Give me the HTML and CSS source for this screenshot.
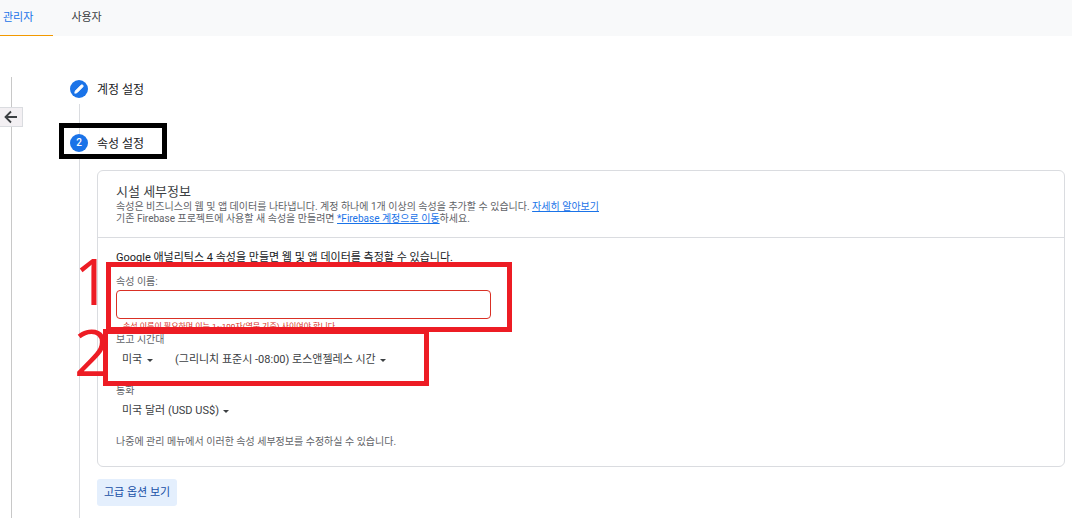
FILE: index.html
```html
<!DOCTYPE html>
<html lang="ko">
<head>
  <meta charset="UTF-8">
  <title>속성 설정</title>
  <link rel="stylesheet" href="styles.css">
</head>
<body>
  <nav class="tabs">
    <a class="tab active" href="#admin">관리자</a>
    <a class="tab" href="#user">사용자</a>
  </nav>

  <div class="page">
    <aside class="rail">
      <button class="back" type="button" aria-label="뒤로">
        <svg width="14" height="14" viewBox="0 0 14 14"><path d="M13 7H2M7 1.5L1.5 7L7 12.5" fill="none" stroke="#3c4043" stroke-width="1.8"/></svg>
      </button>
    </aside>

    <main class="steps">
      <section class="step">
        <div class="marker">
          <span class="dot">
            <svg width="12" height="12" viewBox="0 0 12 12"><path d="M1.8 10.2L2.3 8L8.2 2.1Q9 1.4 9.8 2.2Q10.6 3 9.9 3.8L4 9.7Z" fill="#fff" stroke="#fff" stroke-width="1" stroke-linejoin="round"/></svg>
          </span>
        </div>
        <h2 class="step-title">계정 설정</h2>
      </section>

      <section class="step">
        <div class="marker"><span class="dot">2</span></div>
        <div class="step-body">
          <h2 class="step-title">속성 설정</h2>

          <form class="card">
            <header class="card-head">
              <h3>시설 세부정보</h3>
              <p>속성은 비즈니스의 웹 및 앱 데이터를 나타냅니다. 계정 하나에 1개 이상의 속성을 추가할 수 있습니다. <a href="#more">자세히 알아보기</a></p>
              <p>기존 Firebase 프로젝트에 사용할 새 속성을 만들려면 <a href="#firebase">*Firebase 계정으로 이동</a>하세요.</p>
            </header>
            <div class="card-body">
              <p class="lead">Google 애널리틱스 4 속성을 만들면 웹 및 앱 데이터를 측정할 수 있습니다.</p>
              <label class="label" for="name">속성 이름:</label>
              <input class="name" type="text" id="name">
              <p class="error">속성 이름이 필요하며 이는 1~100자(영문 기준) 사이여야 합니다.</p>

              <label class="label" for="country">보고 시간대</label>
              <div class="selects">
                <span class="select"><select id="country"><option>미국</option></select></span>
                <span class="select"><select aria-label="시간대"><option>(그리니치 표준시 -08:00) 로스앤젤레스 시간</option></select></span>
              </div>

              <label class="label" for="currency">통화</label>
              <div class="selects">
                <span class="select"><select id="currency"><option>미국 달러 (USD US$)</option></select></span>
              </div>
              <p class="note">나중에 관리 메뉴에서 이러한 속성 세부정보를 수정하실 수 있습니다.</p>
            </div>
          </form>

          <button class="advanced" type="button">고급 옵션 보기</button>
        </div>
      </section>
    </main>
  </div>

  <!-- 강조 표시 -->
  <div class="mark mark-step"></div>
  <div class="mark mark-name"></div>
  <div class="mark mark-zone"></div>
  <span class="num num-1">1</span>
  <span class="num num-2">2</span>
</body>
</html>
```

FILE: styles.css
```css
* { box-sizing: border-box; }
body {
  position: relative;
  margin: 0;
  min-height: 100vh;
  display: flex;
  flex-direction: column;
  overflow: hidden;
  background: #fff;
  color: #3c4043;
  font: 11px/16px Roboto, "Noto Sans CJK KR", sans-serif;
}
h2, h3, p { margin: 0; font-weight: 400; }
a { color: #1a73e8; }

.tabs { display: flex; height: 36px; background: #f8f9fa; }
.tab { padding: 10px 18px 0; color: #3c4043; text-decoration: none; }
.tab.active { padding: 10px 20px 0 3px; color: #1a73e8; border-bottom: 1px solid #f29900; }

.page { display: flex; flex: 1; }
.rail {
  width: 23px;
  flex: none;
  margin-top: 41px;
  padding-top: 30px;
  background: linear-gradient(#c8c8c8, #c8c8c8) 11px 0 / 1px 100% no-repeat;
}
.back {
  display: flex;
  align-items: center;
  justify-content: center;
  width: 23px;
  height: 20px;
  padding: 0;
  background: #f3f0f3;
  border: 1px solid #dadce0;
  border-left: 0;
}

.steps { flex: 1; display: flex; flex-direction: column; padding: 44px 7px 0 47px; }
.step { display: flex; gap: 9px; min-height: 54px; }
.step:last-child { flex: 1; }
.step-body { flex: 1; }
.marker { display: flex; flex-direction: column; align-items: center; width: 18px; }
.marker::after { content: ""; flex: 1; width: 1px; margin-top: 6px; background: #dadce0; }
.dot {
  display: flex;
  align-items: center;
  justify-content: center;
  width: 18px;
  height: 18px;
  border-radius: 50%;
  background: #1a73e8;
  color: #fff;
  font-size: 10px;
  font-weight: 500;
}
.step-title { font-size: 12px; line-height: 20px; color: #202124; }

.card { margin-top: 16px; border: 1px solid #dadce0; border-radius: 6px; }
.card-head { padding: 12px 18px; border-bottom: 1px solid #dadce0; font-size: 10px; line-height: 12px; color: #5f6368; }
.card-head h3 { font-size: 13px; line-height: 18px; color: #3c4043; }
.card-body { padding: 12px 18px 16px; }
.lead { color: #202124; }
.label { display: block; margin-top: 9px; font-size: 10px; line-height: 14px; color: #5f6368; }
.name {
  display: block;
  width: 375px;
  max-width: 100%;
  height: 29px;
  margin-top: 1px;
  padding: 0 8px;
  border: 1px solid #d93025;
  border-radius: 4px;
  font: inherit;
}
.error { padding-left: 7px; margin: 2px 0 -9px; font-size: 8px; line-height: 12px; color: #d93025; }
.selects { display: flex; gap: 22px; padding: 4px 6px; }
.select { display: inline-flex; align-items: center; gap: 4px; }
.select::after { content: ""; border: 3px solid transparent; border-top-color: #3c4043; border-bottom: 0; }
.select select {
  appearance: none;
  height: 18px;
  padding: 0;
  border: 0;
  background: none;
  color: #3c4043;
  font: inherit;
}
.selects + .label { margin-top: 11px; }
.note { margin-top: 10px; font-size: 10px; line-height: 16px; color: #5f6368; }
.advanced {
  margin-top: 12px;
  padding: 0 7px;
  height: 27px;
  border: 0;
  border-radius: 3px;
  background: #e4effd;
  color: #174ea6;
  font: inherit;
}

.mark { position: absolute; border: 5px solid #ed1c24; pointer-events: none; }
.mark-step { left: 59px; top: 123px; width: 108px; height: 36px; border-color: #000; }
.mark-name { left: 106px; top: 262px; width: 406px; height: 70px; }
.mark-zone { left: 103px; top: 329px; width: 326px; height: 57px; }
.num { position: absolute; left: 74px; color: #ed1c24; font: 64px/48px "Open Sans", sans-serif; }
.num-1 { top: 257px; }
.num-2 { top: 328px; }
```
